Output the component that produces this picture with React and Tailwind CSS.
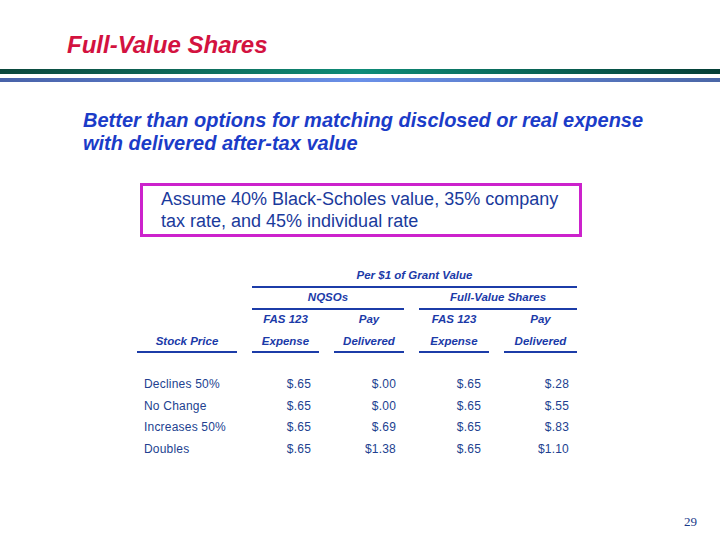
import React from 'react';

const rows = [
  { label: 'Declines 50%', values: ['$.65', '$.00', '$.65', '$.28'] },
  { label: 'No Change', values: ['$.65', '$.00', '$.65', '$.55'] },
  { label: 'Increases 50%', values: ['$.65', '$.69', '$.65', '$.83'] },
  { label: 'Doubles', values: ['$.65', '$1.38', '$.65', '$1.10'] },
];

const headCell = "text-center text-[11.5px] leading-[14px] font-bold italic text-[#1b3aa8]";
const underline = "border-b-2 border-[#1c3ca8]";

const App = () => {
  return (
    <div className="w-[720px] h-[540px] bg-white flex flex-col font-['Liberation_Sans',Arial,sans-serif]">
      {/* title */}
      <h1 className="pt-[31px] pl-[67px] text-[24px] leading-[28px] font-bold italic text-[#d3123f]">
        Full-Value Shares
      </h1>

      {/* double rule */}
      <div className="mt-[10px] flex flex-col gap-[4px]">
        <div className="h-[5px] bg-linear-to-r from-[#0b473c] via-[#0e8c78] to-[#053e36]" />
        <div className="h-[4px] bg-linear-to-r from-[#4862a8] via-[#6a90e8] to-[#4a66a6]" />
      </div>

      {/* subtitle */}
      <p className="mt-[27px] ml-[83px] text-[20px] leading-[23px] font-bold italic text-[#1b3cc8]">
        Better than options for matching disclosed or real expense
        <br />
        with delivered after-tax value
      </p>

      {/* assumption box */}
      <div className="mt-[28px] ml-[140px] w-[442px] h-[54px] border-[3px] border-[#cc22cc] pt-[2px] pl-[18px] text-[18px] leading-[22px] text-[#1a3a9c]">
        Assume 40% Black-Scholes value, 35% company
        <br />
        tax rate, and 45% individual rate
      </div>

      {/* table */}
      <div className="mt-[31px] ml-[137px] grid grid-cols-[100px_67px_70px_70px_73px] gap-x-[15px]">
        <div className={`col-start-2 col-span-4 pb-[4px] ${underline} ${headCell}`}>
          Per $1 of Grant Value
        </div>

        <div className={`col-start-2 col-span-2 mt-[2px] pb-[4px] ${underline} ${headCell}`}>NQSOs</div>
        <div className={`col-span-2 mt-[2px] pb-[4px] ${underline} ${headCell}`}>Full-Value Shares</div>

        <div className={`col-start-2 mt-[2px] ${headCell}`}>FAS 123</div>
        <div className={`mt-[2px] ${headCell}`}>Pay</div>
        <div className={`mt-[2px] ${headCell}`}>FAS 123</div>
        <div className={`mt-[2px] ${headCell}`}>Pay</div>

        {['Stock Price', 'Expense', 'Delivered', 'Expense', 'Delivered'].map((h, i) => (
          <div key={i} className={`mt-[8px] pb-[3px] ${underline} ${headCell}`}>{h}</div>
        ))}

        <div className="col-span-5 h-[21px]" />

        {rows.map((r) => (
          <React.Fragment key={r.label}>
            <div className="pl-[7px] text-[12px] leading-[21.5px] tracking-[0.2px] text-[#223f90]">{r.label}</div>
            {r.values.map((v, i) => (
              <div key={i} className="pr-[8px] text-right text-[12px] leading-[21.5px] tracking-[0.2px] text-[#223f90]">
                {v}
              </div>
            ))}
          </React.Fragment>
        ))}
      </div>

      {/* page number */}
      <div className="mt-auto pb-[11px] pr-[23px] flex justify-end">
        <span className="text-[13px] leading-[15px] text-[#1a3a8a] font-['Liberation_Serif','Times_New_Roman',serif]">29</span>
      </div>
    </div>
  );
};

export default App;
